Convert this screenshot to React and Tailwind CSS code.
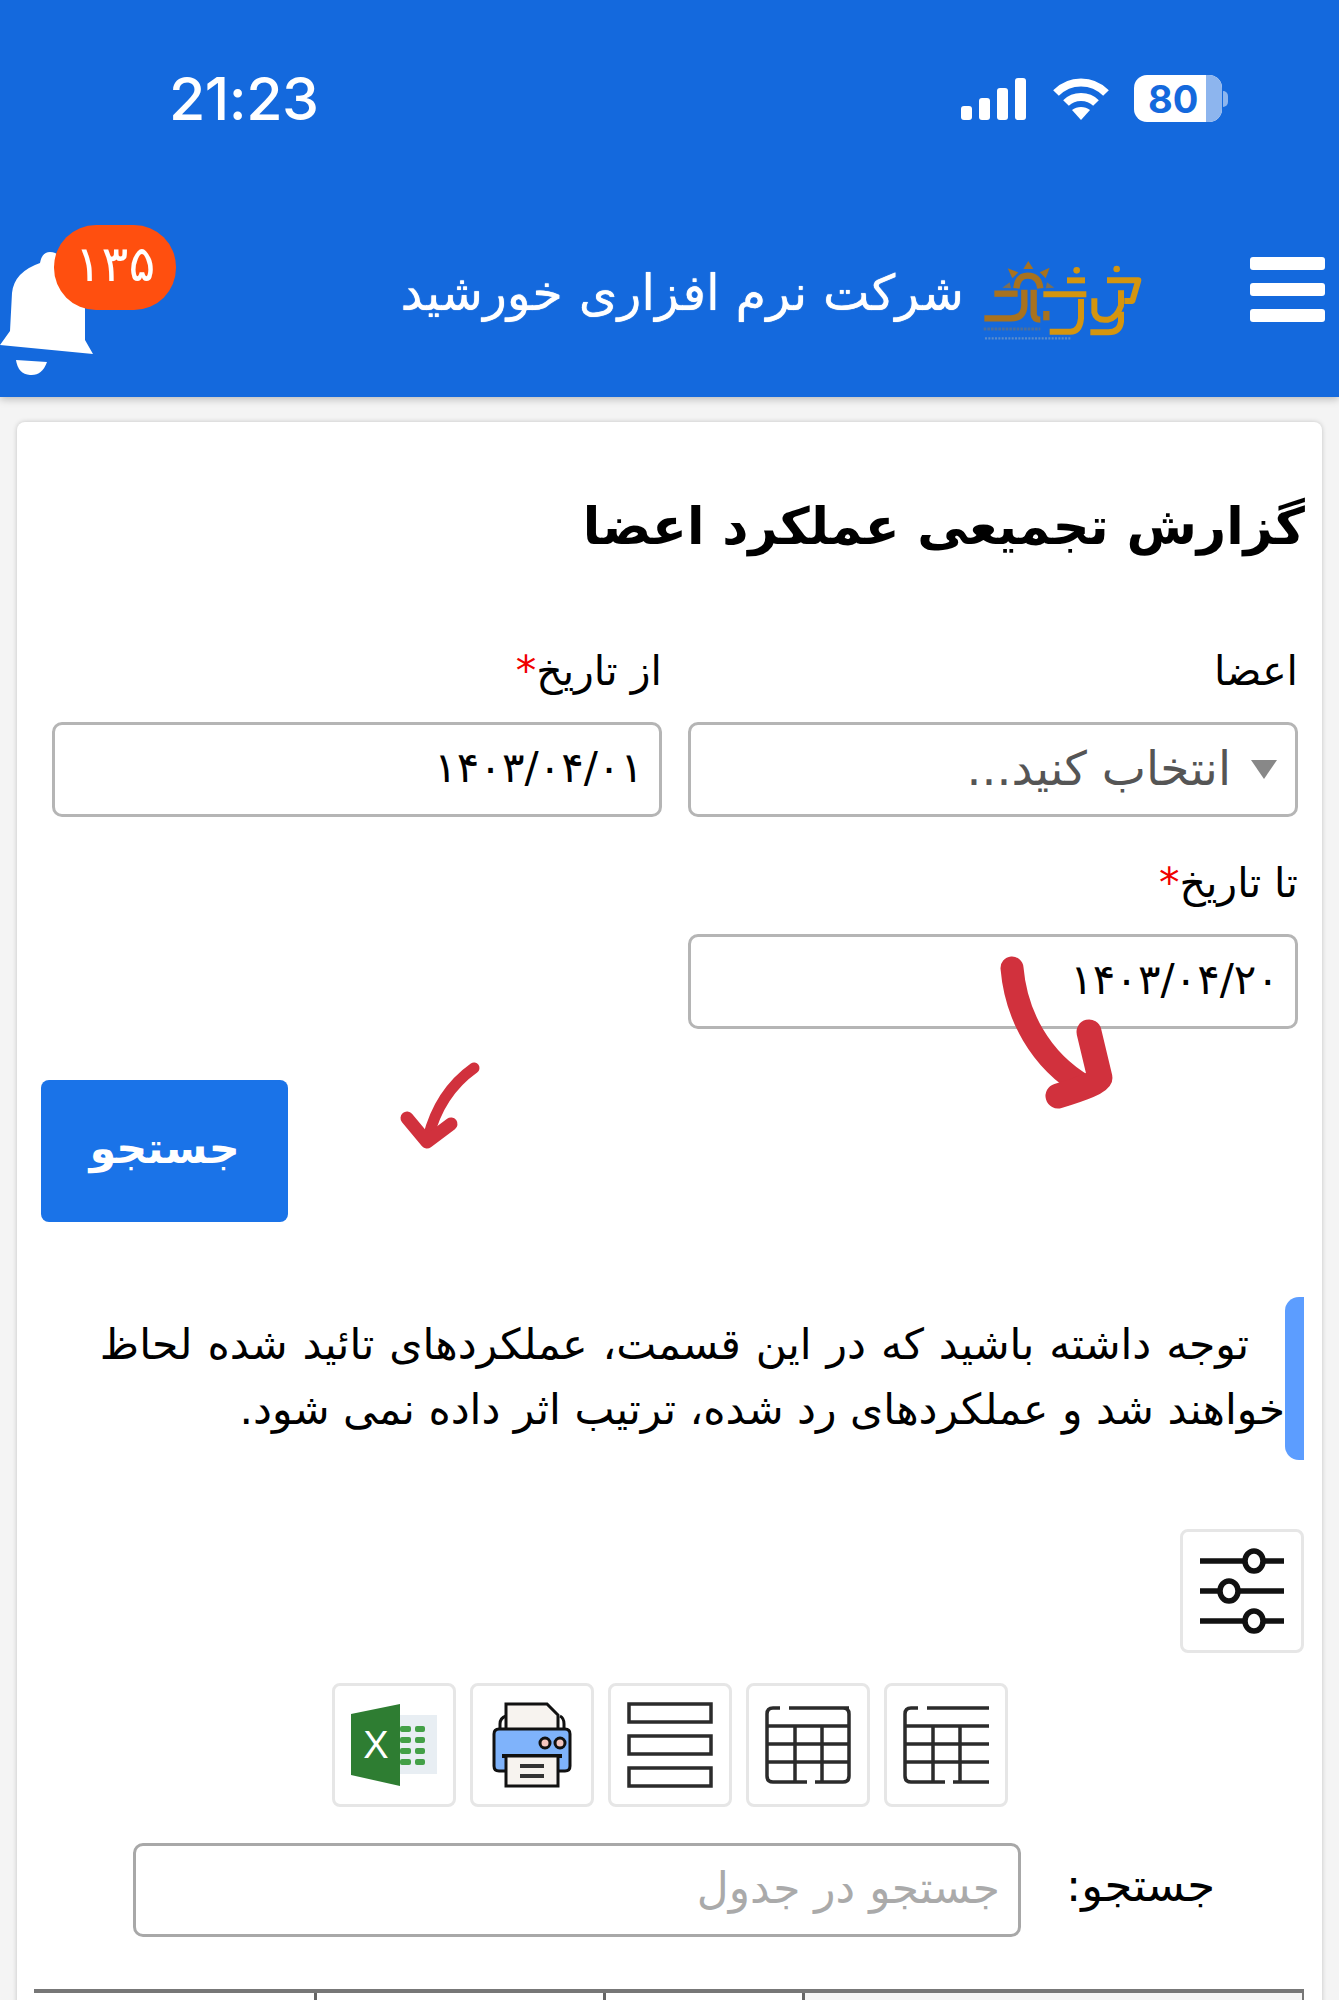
import React from 'react';

const fa = "font-['DejaVu_Sans',sans-serif]";

function Field({ label, required, children }) {
  return (
    <div className="flex flex-col">
      <label className="h-[50px] leading-[50px] text-[41px] text-black mb-[26px]">
        {label}
        {required && <span className="text-[#f00000]">*</span>}
      </label>
      {children}
    </div>
  );
}

function TextBox({ value }) {
  return (
    <div className="h-[95px] border-[3px] border-[#b5b5b5] rounded-[10px] flex items-center px-[16px] pb-[4px] text-[42px] text-black bg-white">
      {value}
    </div>
  );
}

function IconBtn({ children }) {
  return (
    <div className="w-[124px] h-[124px] border-[3px] border-[#e6e6e6] rounded-[8px] bg-white flex items-center justify-center">
      {children}
    </div>
  );
}

function StatusBar() {
  return (
    <div dir="ltr" className="h-[197px] flex items-center font-['Inter',sans-serif] text-white">
      <div className="ml-[169px] text-[59px] font-medium leading-none tracking-[-0.5px]">21:23</div>
      <div className="ml-auto mr-[111px] flex items-center">
        <svg width="66" height="42" viewBox="0 0 66 42" fill="#fff">
          <rect x="0" y="28" width="11" height="14" rx="3" />
          <rect x="18" y="20" width="11" height="22" rx="3" />
          <rect x="36" y="10" width="11" height="32" rx="3" />
          <rect x="54" y="0" width="11" height="42" rx="3" />
        </svg>
        <svg className="ml-[25px]" width="58" height="42" viewBox="0 0 58 42" fill="none" stroke="#fff" strokeWidth="8">
          <path d="M4 15 C18 1 40 1 54 15" />
          <path d="M14 25 C22 17 36 17 44 25" />
          <path d="M29 42 L20 32 C25 28 33 28 38 32 Z" fill="#fff" stroke="none" />
        </svg>
        <div className="ml-[24px] relative w-[88px] h-[47px] rounded-[13px] bg-white overflow-hidden flex items-center pl-[14px] text-[38px] font-bold text-[#1469dd] leading-none">
          80
          <div className="absolute right-0 top-0 bottom-0 w-[16px] bg-[#8db5ee]" />
        </div>
        <div className="w-[5px] h-[16px] rounded-r-full bg-[#8db5ee] ml-[1px]" />
      </div>
    </div>
  );
}

// rough trace of the company logo, coordinates are 3x the drawn size
function Logo() {
  return (
    <svg width="170" height="92" viewBox="0 0 510 276" fill="none" strokeLinejoin="round">
      <g fill="#a8721e">
        <path d="M160 18 L175 42 L145 42 Z" />
        <path d="M98 40 L130 52 L112 70 Z" />
        <path d="M224 38 L194 52 L212 70 Z" />
        <path d="M82 98 L104 82 L108 100 Z" opacity="0.7" />
        <path d="M238 98 L216 82 L212 100 Z" opacity="0.7" />
      </g>
      <g stroke="#a8721e" strokeWidth="19">
        <path d="M124 100 Q128 62 158 62 Q192 62 196 100" />
        <path d="M58 116 H128" />
        <path d="M148 104 V152 Q146 190 108 190 H28" />
        <path d="M176 104 V178 Q178 194 196 194" />
        <path d="M214 168 V196" />
      </g>
      <g stroke="#d4950f" strokeWidth="18">
        <path d="M205 118 H334" />
        <path d="M276 76 H330" />
        <path d="M318 132 V190 Q314 230 286 230 H224" />
        <path d="M396 76 H490 L472 138 H448" />
        <path d="M358 130 V172 Q364 198 398 194 Q424 190 438 152 V106" />
        <path d="M438 170 V200 Q434 232 400 232 H346" />
      </g>
      <g fill="#d4950f">
        <circle cx="305" cy="46" r="10" />
        <circle cx="425" cy="42" r="10" />
      </g>
      <path d="M26 222 H196" stroke="#4a6f9e" strokeWidth="9" strokeDasharray="8 3" />
      <path d="M30 250 H290" stroke="#5a8ccb" strokeWidth="7" strokeDasharray="6 4" />
    </svg>
  );
}

function Bell() {
  return (
    <div className="relative w-[94px] h-[135px] self-start mt-[48px]">
      <svg width="94" height="135" viewBox="0 245 94 135" fill="#fff">
        <path d="M0 345 L10 331 L12 293 Q14 272 40 263 Q42 252 50 252 Q60 252 62 264 Q85 272 85 310 L85 340 L93 354 Z" />
        <path d="M16 360 L47 362 Q42 376 30 375 Q18 374 16 360 Z" />
      </svg>
      <div className="absolute left-[54px] top-[-20px] w-[122px] h-[85px] rounded-[42px] bg-[#ff4f0f] text-white text-[50px] flex items-center justify-center leading-none pb-[8px]">
        ۱۳۵
      </div>
    </div>
  );
}

function Navbar() {
  return (
    <div className="h-[200px] flex items-center pr-[14px] text-white">
      <div className="w-[75px] flex flex-col gap-[13px] mt-[-15px]">
        <div className="h-[13px] rounded-[3px] bg-white" />
        <div className="h-[13px] rounded-[3px] bg-white" />
        <div className="h-[13px] rounded-[3px] bg-white" />
      </div>
      <div className="mr-[105px] mt-[8px]"><Logo /></div>
      <div className="mr-[11px] text-[49.5px] leading-none mt-[-6px] [text-shadow:0_0_1px_#fff]">شرکت نرم افزاری خورشید</div>
      <div className="mr-auto self-stretch flex"><Bell /></div>
    </div>
  );
}

function TableIcon({ open }) {
  return (
    <svg width="86" height="78" viewBox="0 0 86 78" fill="none" stroke="#2b2b2b" strokeWidth="3.5">
      <path d={open ? 'M86 2 H24 M15 2 H8 Q2 2 2 8 V70 Q2 76 8 76 H42 M50 76 H86' : 'M84 2 H24 M15 2 H8 Q2 2 2 8 V70 Q2 76 8 76 H42 M50 76 H78 Q84 76 84 70 V8 Q84 2 78 2'} />
      <path d={open ? 'M2 20 H86 M2 38 H86 M2 56 H86' : 'M2 20 H84 M2 38 H84 M2 56 H84'} />
      <path d="M30 20 V76 M57 20 V76" />
    </svg>
  );
}

function RowsIcon() {
  return (
    <svg width="86" height="86" viewBox="0 0 86 86" fill="none" stroke="#2b2b2b" strokeWidth="3.5">
      <rect x="2" y="2" width="82" height="18" />
      <rect x="2" y="34" width="82" height="18" />
      <rect x="2" y="66" width="82" height="18" />
    </svg>
  );
}

function PrinterIcon() {
  return (
    <svg width="80" height="86" viewBox="0 0 80 86" strokeWidth="3" stroke="#111">
      <path d="M8 30 V22 Q8 16 14 14 M72 30 V22 Q72 16 68 14" fill="none" />
      <path d="M14 28 V2 H55 L66 13 V28 Z" fill="#f7f3ef" />
      <path d="M2 32 Q2 27 7 27 H73 Q78 27 78 32 V64 Q78 69 73 69 H7 Q2 69 2 64 Z" fill="#7fb3fb" />
      <circle cx="53" cy="41" r="5" fill="#f4c6c0" />
      <circle cx="68" cy="41" r="5" fill="#f4c6c0" />
      <path d="M10 54 H70" strokeWidth="4" />
      <rect x="14" y="54" width="52" height="30" fill="#f7f3ef" />
      <path d="M28 64 H52 M28 74 H52" strokeWidth="4" stroke="#333" />
    </svg>
  );
}

function ExcelIcon() {
  return (
    <svg width="86" height="82" viewBox="0 0 86 82">
      <rect x="49" y="11" width="37" height="59" fill="#e8eef3" />
      <path d="M0 10 L49 0 V82 L0 71 Z" fill="#2e7d32" />
      <text x="25" y="54" textAnchor="middle" fontFamily="Liberation Sans" fontSize="38" fill="#fff">X</text>
      <g fill="#43a047">
        <rect x="49" y="22" width="11" height="6" rx="2" /><rect x="64" y="22" width="10" height="6" rx="2" />
        <rect x="49" y="33" width="11" height="6" rx="2" /><rect x="64" y="33" width="10" height="6" rx="2" />
        <rect x="49" y="44" width="11" height="6" rx="2" /><rect x="64" y="44" width="10" height="6" rx="2" />
        <rect x="49" y="55" width="11" height="6" rx="2" /><rect x="64" y="55" width="10" height="6" rx="2" />
      </g>
    </svg>
  );
}

function SlidersIcon() {
  return (
    <svg width="86" height="86" viewBox="0 0 86 86" fill="#fff" stroke="#111" strokeWidth="5.5">
      <path d="M1 13 H85 M1 43 H85 M1 73 H85" />
      <ellipse cx="55" cy="13" rx="9" ry="10" />
      <ellipse cx="30" cy="43" rx="9" ry="10" />
      <ellipse cx="55" cy="73" rx="9" ry="10" />
    </svg>
  );
}

function Arrows() {
  return (
    <>
      <svg className="absolute left-[990px] top-[950px]" width="130" height="170" viewBox="990 950 130 170" fill="none" stroke="#d1313d" strokeLinecap="round" strokeLinejoin="round">
        <path d="M1012 968 C1016 1015 1040 1060 1084 1086" strokeWidth="23" />
        <path d="M1089 1032 L1100 1078 Q1098 1084 1058 1096" strokeWidth="25" />
      </svg>
      <svg className="absolute left-[395px] top-[1055px]" width="90" height="100" viewBox="395 1055 90 100" fill="none" stroke="#d1313d" strokeLinecap="round" strokeLinejoin="round">
        <path d="M474 1068 C450 1085 435 1110 428 1138" strokeWidth="11" />
        <path d="M407 1118 L427 1142 L451 1124" strokeWidth="13" />
      </svg>
    </>
  );
}

export default function App() {
  return (
    <div dir="rtl" className={`relative h-[2000px] overflow-hidden bg-[#f4f4f4] ${fa}`}>
      <div className="bg-[#1469dd] shadow-[0_2px_8px_rgba(0,0,0,0.25)]">
        <StatusBar />
        <Navbar />
      </div>

      <div className="mt-[25px] mx-[17px] bg-white rounded-[8px] shadow-[0_0_5px_rgba(0,0,0,0.2)] h-[1600px]">
        <div className="pt-[75px] pr-[17px] h-[136px]">
          <h1 className="text-[51px] font-bold leading-[60px] text-black">گزارش تجمیعی عملکرد اعضا</h1>
        </div>

        <div className="mt-[88px] pr-[24px] pl-[35px] grid grid-cols-2 gap-x-[26px] gap-y-[41px]">
          <Field label="اعضا">
            <div className="h-[95px] border-[3px] border-[#b5b5b5] rounded-[10px] flex items-center px-[18px] text-[47px] text-[#555] bg-white gap-[20px]">
              <span className="w-0 h-0 border-x-[13px] border-x-transparent border-t-[19px] border-t-[#888]" />
              <span>انتخاب کنید...</span>
            </div>
          </Field>
          <Field label="از تاریخ" required>
            <TextBox value="۱۴۰۳/۰۴/۰۱" />
          </Field>
          <Field label="تا تاریخ" required>
            <TextBox value="۱۴۰۳/۰۴/۲۰" />
          </Field>
        </div>

        <div className="mt-[51px] pl-[24px] flex justify-end">
          <button className="w-[247px] h-[142px] rounded-[8px] bg-[#1a73e8] text-white text-[43px] font-bold pb-[5px]">جستجو</button>
        </div>

        <div className="mt-[75px] mr-[18px] flex h-[163px]">
          <div className="w-[19px] rounded-l-[14px] bg-[#5c9dff] shrink-0" />
          <p className="text-[42.5px] leading-[65px] text-black pt-[15px] whitespace-nowrap">
            <span className="pr-[36px] [word-spacing:1.4px]">توجه داشته باشید که در این قسمت، عملکردهای تائید شده لحاظ</span>
            <br />
            خواهند شد و عملکردهای رد شده، ترتیب اثر داده نمی شود.
          </p>
        </div>

        <div className="mt-[69px] mr-[18px] flex">
          <div className="w-[124px] h-[124px] border-[3px] border-[#e6e6e6] rounded-[8px] bg-white flex items-center justify-center">
            <SlidersIcon />
          </div>
        </div>

        <div className="mt-[30px] flex justify-center gap-[14px]">
          <IconBtn><TableIcon open /></IconBtn>
          <IconBtn><TableIcon /></IconBtn>
          <IconBtn><RowsIcon /></IconBtn>
          <IconBtn><PrinterIcon /></IconBtn>
          <IconBtn><ExcelIcon /></IconBtn>
        </div>

        <div className="mt-[36px] pr-[107px] flex items-center">
          <label className="text-[45px] text-black w-[145px] whitespace-nowrap pb-[8px]">جستجو:</label>
          <div className="mr-[49px] w-[888px] h-[94px] border-[3px] border-[#a8a8a8] rounded-[10px] flex items-center px-[18px] pb-[4px] text-[44px] text-[#aaa] bg-white">
            جستجو در جدول
          </div>
        </div>

        <div className="mt-[52px] mr-[18px] ml-[17px] flex h-[80px] border-t-[4px] border-[#777] border-r-[2px]">
          <div className="w-[500px] bg-[#f5f5f5] border-l-[3px] border-[#666]" />
          <div className="w-[199px] border-l-[3px] border-[#666]" />
          <div className="w-[289px] border-l-[3px] border-[#666]" />
          <div className="flex-1" />
        </div>
      </div>

      <Arrows />
    </div>
  );
}
